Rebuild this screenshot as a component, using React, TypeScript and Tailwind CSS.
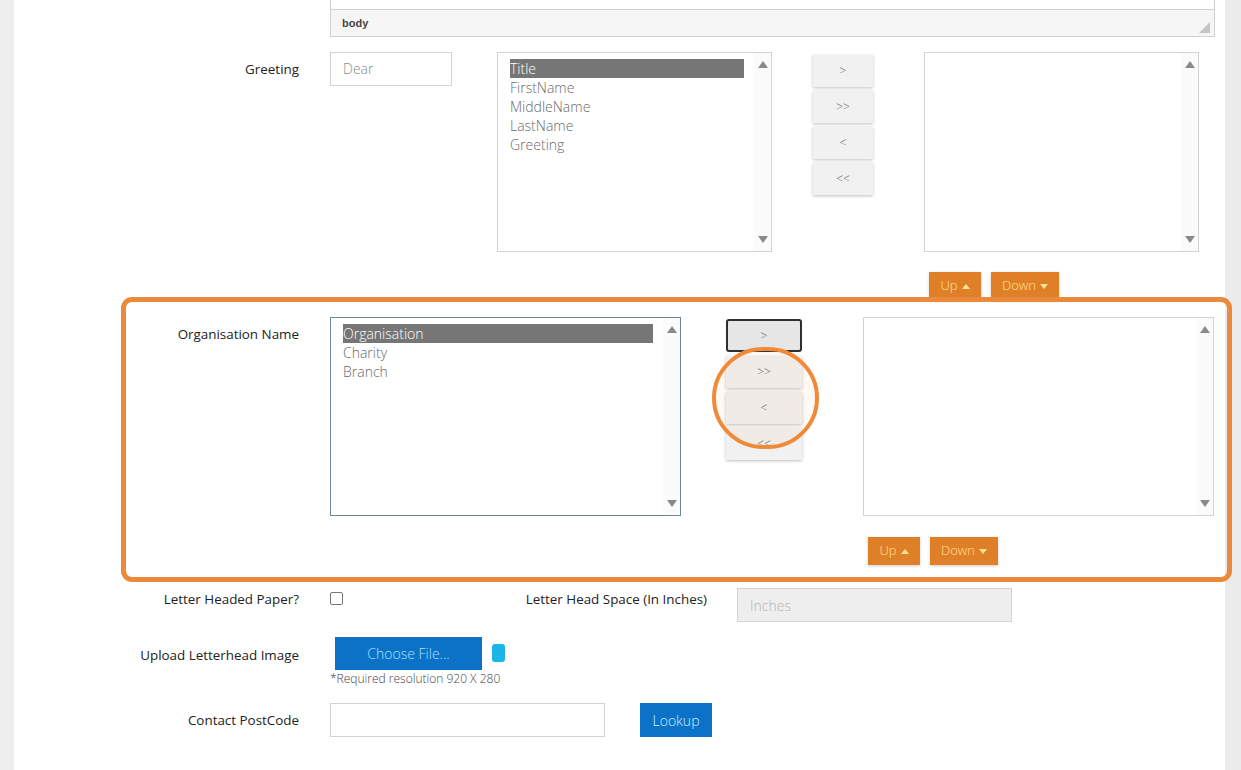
import React from "react";

function Tri({ up, color = "#8a8a8a", w = 10, h = 7 }: { up: boolean; color?: string; w?: number; h?: number }) {
  return (
    <svg width={w} height={h} viewBox="0 0 9 6" preserveAspectRatio="none" className="block">
      {up ? <polygon points="0,6 4.5,0 9,6" fill={color} /> : <polygon points="0,0 9,0 4.5,6" fill={color} />}
    </svg>
  );
}

function ListBox({ items, cls, focused }: { items: string[]; cls: string; focused?: boolean }) {
  return (
    <div className={`flex bg-white border ${focused ? "border-[#6b8797]" : "border-[#d3d3d3]"} ${cls}`}>
      <div className="flex-1 pl-[12px] pr-[10px] pt-[6px]">
        {items.map((it, i) => (
          <div
            key={it}
            className={`h-[19px] leading-[19px] text-[14px] font-light ${i === 0 ? "bg-[#767676] text-white" : "text-[#6a6a6a]"}`}
          >
            {it}
          </div>
        ))}
      </div>
      <div className="w-[17px] bg-[#fbfbfb] flex flex-col items-center justify-between pt-[8px] pb-[8px]">
        <Tri up />
        <Tri up={false} />
      </div>
    </div>
  );
}

function TBtn({ label, cls, focused }: { label: string; cls: string; focused?: boolean }) {
  return (
    <div
      className={`flex items-center justify-center text-[12px] font-light text-[#666] ${cls} ${
        focused
          ? "bg-[#e6e6e6] border-2 border-[#2f2f2f] rounded-[3px]"
          : "bg-[#f1f1f1] shadow-[0_1px_3px_rgba(0,0,0,0.25)]"
      }`}
    >
      {label}
    </div>
  );
}

function OrangeBtn({ label, up }: { label: string; up: boolean }) {
  return (
    <div
      className={`h-[28px] flex items-center justify-center gap-[4px] bg-[#df7f28] text-[#ffe394] text-[13px] font-light shadow-[0_1px_3px_rgba(0,0,0,0.2)] ${
        up ? "w-[52px]" : "w-[68px]"
      }`}
    >
      <span>{label}</span>
      <Tri up={up} color="#ffe394" w={8} h={5} />
    </div>
  );
}

export default function App() {
  return (
    <div className="relative w-[1241px] h-[770px] overflow-hidden flex bg-[#eeeeee] font-['Open_Sans',sans-serif] text-[#222]">
      <div className="w-[14px] shrink-0 bg-[#eeeeee]" />
      <div className="w-[1211px] shrink-0 bg-white flex flex-col">
        {/* editor remnant */}
        <div className="ml-[316px] w-[885px] h-[37px] border-x border-b border-[#d1d1d1] flex flex-col">
          <div className="h-[10px] border-b border-[#d1d1d1] bg-white" />
          <div className="flex-1 bg-[#f6f6f6] flex items-center justify-between pl-[11px] pr-[4px]">
            <span className="text-[11px] font-bold text-[#444] font-['Liberation_Sans',sans-serif]">body</span>
            <svg width="11" height="11" viewBox="0 0 11 11" className="mt-[8px]">
              <polygon points="11,0 11,11 0,11" fill="#c4c4c4" />
            </svg>
          </div>
        </div>

        {/* Greeting */}
        <div className="flex mt-[15px]">
          <div className="w-[285px] text-right text-[13.4px] leading-5 pt-[7px]">Greeting</div>
          <div className="ml-[31px] flex items-start">
            <div className="w-[122px] h-[34px] border border-[#d3d3d3] flex items-center pl-[12px] pb-[1px] text-[14px] font-light text-[#8a8a8a]">
              Dear
            </div>
            <ListBox
              cls="ml-[45px] w-[275px] h-[200px]"
              items={["Title", "FirstName", "MiddleName", "LastName", "Greeting"]}
            />
            <div className="ml-[41px] mt-[3px] flex flex-col gap-[4px]">
              <TBtn label=">" cls="w-[60px] h-[32px]" />
              <TBtn label=">>" cls="w-[60px] h-[32px]" />
              <TBtn label="<" cls="w-[60px] h-[32px]" />
              <TBtn label="<<" cls="w-[60px] h-[32px]" />
            </div>
            <div className="ml-[51px] flex flex-col">
              <ListBox cls="w-[275px] h-[200px]" items={[]} />
              <div className="mt-[20px] ml-[5px] flex gap-[10px]">
                <OrangeBtn label="Up" up />
                <OrangeBtn label="Down" up={false} />
              </div>
            </div>
          </div>
        </div>

        {/* Organisation Name */}
        <div className="flex mt-[17px]">
          <div className="w-[285px] text-right text-[13.4px] leading-5 pt-[7px]">Organisation Name</div>
          <div className="ml-[31px] flex items-start">
            <ListBox cls="w-[351px] h-[199px]" focused items={["Organisation", "Charity", "Branch"]} />
            <div className="ml-[45px] mt-[2px] flex flex-col gap-[4px]">
              <TBtn label=">" cls="w-[76px] h-[33px]" focused />
              <TBtn label=">>" cls="w-[76px] h-[32px]" />
              <TBtn label="<" cls="w-[76px] h-[32px]" />
              <TBtn label="<<" cls="w-[76px] h-[32px]" />
            </div>
            <div className="ml-[61px] flex flex-col">
              <ListBox cls="w-[351px] h-[199px]" items={[]} />
              <div className="mt-[21px] ml-[5px] flex gap-[10px]">
                <OrangeBtn label="Up" up />
                <OrangeBtn label="Down" up={false} />
              </div>
            </div>
          </div>
        </div>

        {/* Letter Headed Paper */}
        <div className="flex mt-[23px] h-[34px]">
          <div className="w-[285px] text-right text-[13.4px] leading-5 pt-[1px]">Letter Headed Paper?</div>
          <div className="ml-[31px] flex items-start">
            <div className="mt-[4px] w-[13px] h-[13px] border border-[#767676] rounded-[2px] bg-white" />
            <div className="w-[364px] text-right text-[13.4px] leading-5 pt-[1px]">Letter Head Space (In Inches)</div>
            <div className="ml-[30px] w-[275px] h-[34px] bg-[#eeeeee] border border-[#d3d3d3] flex items-center pl-[12px] text-[14px] font-light text-[#b5b5b5]">
              Inches
            </div>
          </div>
        </div>

        {/* Upload */}
        <div className="flex mt-[15px]">
          <div className="w-[285px] text-right text-[13.4px] leading-5 pt-[8px]">Upload Letterhead Image</div>
          <div className="ml-[31px] flex flex-col">
            <div className="flex items-start ml-[5px]">
              <div className="w-[147px] h-[33px] bg-[#0b72c8] text-[#a9e3ff] text-[14px] font-light flex items-center justify-center">
                Choose File...
              </div>
              <div className="ml-[10px] mt-[7px] w-[13px] h-[18px] rounded-[3px] bg-[#1bb5e8]" />
            </div>
            <div className="text-[12px] leading-4 font-light text-[#444] mt-[1px]">*Required resolution 920 X 280</div>
          </div>
        </div>

        {/* Contact PostCode */}
        <div className="flex mt-[16px]">
          <div className="w-[285px] text-right text-[13.4px] leading-5 pt-[7px]">Contact PostCode</div>
          <div className="ml-[31px] flex items-start">
            <div className="w-[275px] h-[34px] border border-[#d3d3d3] bg-white" />
            <div className="ml-[35px] w-[72px] h-[34px] bg-[#0b72c8] text-[#cdeeff] text-[14px] font-light flex items-center justify-center">
              Lookup
            </div>
          </div>
        </div>
      </div>
      <div className="flex-1 bg-[#ebebeb]" />

      {/* annotations */}
      <div className="absolute left-[121px] top-[297px] w-[1111px] h-[285px] border-[5px] border-[#ec8a3b] rounded-[11px] pointer-events-none" />
      <div className="absolute left-[712px] top-[347px] w-[107px] h-[102px] border-[4px] border-[#f08a38] rounded-full bg-[rgba(240,138,56,0.05)] pointer-events-none" />
    </div>
  );
}
